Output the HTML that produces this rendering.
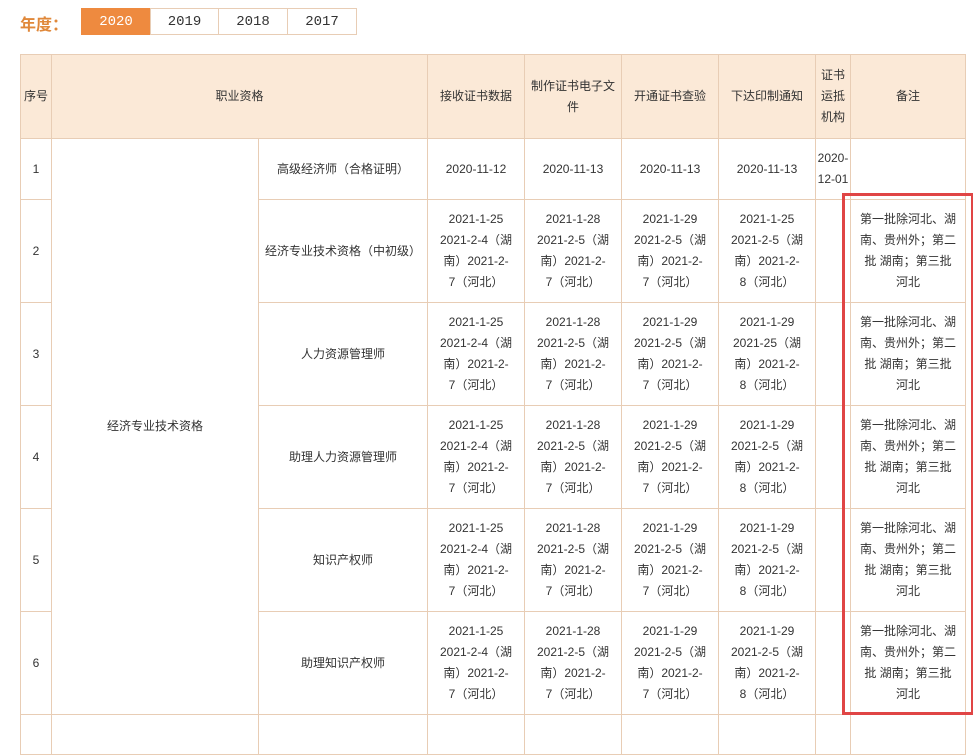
<!DOCTYPE html>
<html><head><meta charset="utf-8"><style>
body{margin:0;background:#fff;width:973px;height:724px;overflow:hidden;font-family:"Liberation Sans","Noto Sans CJK SC",sans-serif;font-size:12px;color:#333;position:relative}
.yl{position:absolute;left:20px;top:11px;font-size:16px;color:#e0883a;font-weight:bold}
.tab{position:absolute;top:8px;height:27px;line-height:27px;border:1px solid #e8cdb5;background:#fff;text-align:center;font-family:"Liberation Mono",monospace;font-size:14px;color:#333;box-sizing:border-box}
.tab.on{background:#ee8a3f;color:#fff;border-color:#ee8a3f}
table{position:absolute;left:20px;top:54px;border-collapse:collapse;table-layout:fixed}
td{border:1px solid #e8cdb5;text-align:center;vertical-align:middle;line-height:21px;padding:0;white-space:nowrap;overflow:hidden}
tr.h td{background:#fbe9d7}
.red{position:absolute;left:842px;top:193px;width:126px;height:516px;border:3px solid #e04545}
</style></head><body>
<div class="yl">年度：</div>
<div class="tab on" style="left:81px;width:70px">2020</div>
<div class="tab" style="left:150px;width:69px">2019</div>
<div class="tab" style="left:218px;width:70px">2018</div>
<div class="tab" style="left:287px;width:70px">2017</div>
<table>
<colgroup><col style="width:31px"><col style="width:207px"><col style="width:169px"><col style="width:97px"><col style="width:97px"><col style="width:97px"><col style="width:97px"><col style="width:35px"><col style="width:115px"></colgroup>
<tr class="h" style="height:84px"><td>序号</td><td colspan="2">职业资格</td><td>接收证书数据</td><td>制作证书电子文<br>件</td><td>开通证书查验</td><td>下达印制通知</td><td>证书<br>运抵<br>机构</td><td>备注</td></tr>
<tr style="height:61px"><td>1</td><td rowspan="6">经济专业技术资格</td><td>高级经济师（合格证明）</td><td>2020-11-12</td><td>2020-11-13</td><td>2020-11-13</td><td>2020-11-13</td><td>2020-<br>12-01</td><td></td></tr>
<tr style="height:103px"><td>2</td><td>经济专业技术资格（中初级）</td><td>2021-1-25<br>2021-2-4（湖<br>南）2021-2-<br>7（河北）</td><td>2021-1-28<br>2021-2-5（湖<br>南）2021-2-<br>7（河北）</td><td>2021-1-29<br>2021-2-5（湖<br>南）2021-2-<br>7（河北）</td><td>2021-1-25<br>2021-2-5（湖<br>南）2021-2-<br>8（河北）</td><td></td><td>第一批除河北、湖<br>南、贵州外；第二<br>批 湖南；第三批<br>河北</td></tr>
<tr style="height:103px"><td>3</td><td>人力资源管理师</td><td>2021-1-25<br>2021-2-4（湖<br>南）2021-2-<br>7（河北）</td><td>2021-1-28<br>2021-2-5（湖<br>南）2021-2-<br>7（河北）</td><td>2021-1-29<br>2021-2-5（湖<br>南）2021-2-<br>7（河北）</td><td>2021-1-29<br>2021-25（湖<br>南）2021-2-<br>8（河北）</td><td></td><td>第一批除河北、湖<br>南、贵州外；第二<br>批 湖南；第三批<br>河北</td></tr>
<tr style="height:103px"><td>4</td><td>助理人力资源管理师</td><td>2021-1-25<br>2021-2-4（湖<br>南）2021-2-<br>7（河北）</td><td>2021-1-28<br>2021-2-5（湖<br>南）2021-2-<br>7（河北）</td><td>2021-1-29<br>2021-2-5（湖<br>南）2021-2-<br>7（河北）</td><td>2021-1-29<br>2021-2-5（湖<br>南）2021-2-<br>8（河北）</td><td></td><td>第一批除河北、湖<br>南、贵州外；第二<br>批 湖南；第三批<br>河北</td></tr>
<tr style="height:103px"><td>5</td><td>知识产权师</td><td>2021-1-25<br>2021-2-4（湖<br>南）2021-2-<br>7（河北）</td><td>2021-1-28<br>2021-2-5（湖<br>南）2021-2-<br>7（河北）</td><td>2021-1-29<br>2021-2-5（湖<br>南）2021-2-<br>7（河北）</td><td>2021-1-29<br>2021-2-5（湖<br>南）2021-2-<br>8（河北）</td><td></td><td>第一批除河北、湖<br>南、贵州外；第二<br>批 湖南；第三批<br>河北</td></tr>
<tr style="height:103px"><td>6</td><td>助理知识产权师</td><td>2021-1-25<br>2021-2-4（湖<br>南）2021-2-<br>7（河北）</td><td>2021-1-28<br>2021-2-5（湖<br>南）2021-2-<br>7（河北）</td><td>2021-1-29<br>2021-2-5（湖<br>南）2021-2-<br>7（河北）</td><td>2021-1-29<br>2021-2-5（湖<br>南）2021-2-<br>8（河北）</td><td></td><td>第一批除河北、湖<br>南、贵州外；第二<br>批 湖南；第三批<br>河北</td></tr>
<tr style="height:40px"><td></td><td></td><td></td><td></td><td></td><td></td><td></td><td></td><td></td></tr>
</table>
<div class="red"></div>
</body></html>
